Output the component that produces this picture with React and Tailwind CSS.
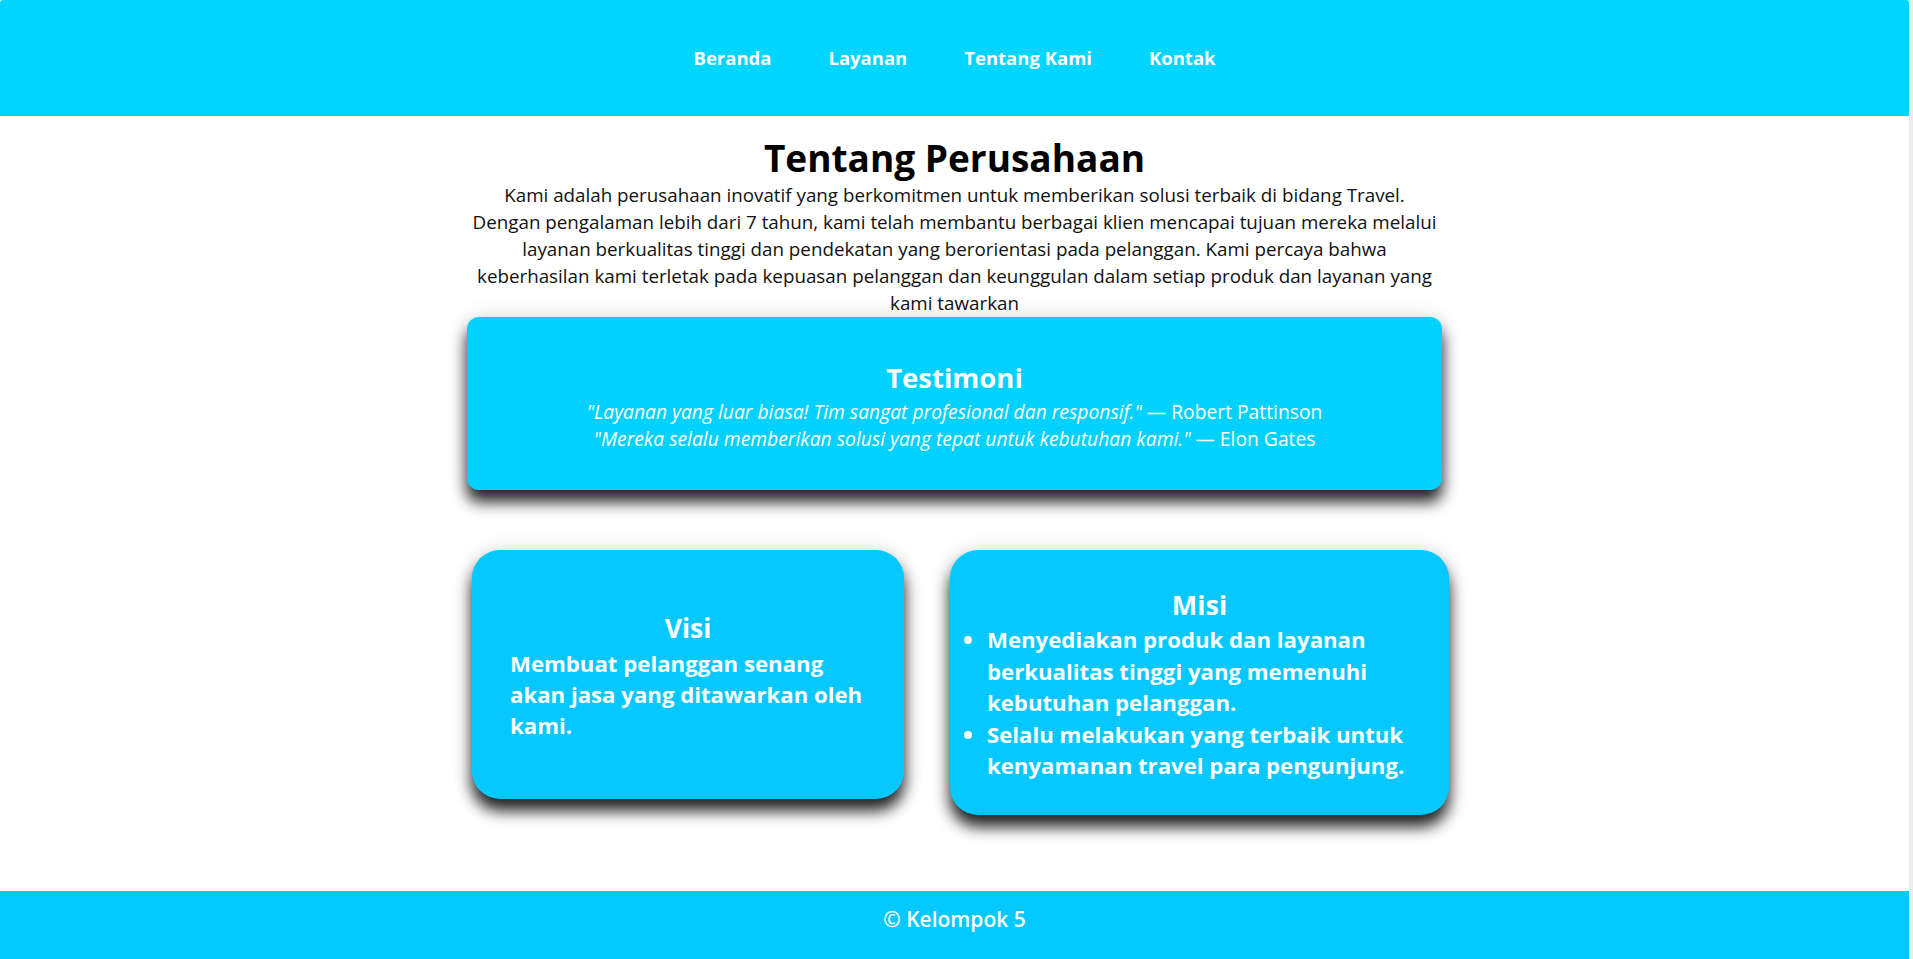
export default function App() {
  const navItems = ['Beranda', 'Layanan', 'Tentang Kami', 'Kontak'];

  return (
    <div className="flex min-h-screen w-full bg-white font-['Open_Sans','Noto_Sans',sans-serif]">
      <div className="flex min-h-screen flex-1 flex-col">
        <header className="flex h-[116px] items-center justify-center rounded-t-[3px] bg-[#00d5ff]">
          <nav className="flex gap-[57px]">
            {navItems.map((item) => (
              <a key={item} href="#" className="text-[18.5px] font-bold text-white">
                {item}
              </a>
            ))}
          </nav>
        </header>

        <main className="flex flex-1 flex-col items-center">
          <section className="w-[975px] pt-[18px] text-center">
            <h1 className="text-[37px] leading-[48px] font-bold text-black">Tentang Perusahaan</h1>
            <p className="text-[18.8px] leading-[27px] text-[#111]">
              Kami adalah perusahaan inovatif yang berkomitmen untuk memberikan solusi terbaik di bidang Travel.
              <br />
              Dengan pengalaman lebih dari 7 tahun, kami telah membantu berbagai klien mencapai tujuan mereka melalui
              <br />
              layanan berkualitas tinggi dan pendekatan yang berorientasi pada pelanggan. Kami percaya bahwa
              <br />
              keberhasilan kami terletak pada kepuasan pelanggan dan keunggulan dalam setiap produk dan layanan yang
              <br />
              kami tawarkan
            </p>

            <div className="h-[173px] rounded-[12px] bg-[#00d1ff] pt-[43px] text-white shadow-[0_12px_15px_rgba(0,0,0,0.85),0_0_22px_rgba(0,0,0,0.12)]">
              <h2 className="text-[27.5px] leading-[36px] font-bold">Testimoni</h2>
              <p className="mt-[2px] text-[19.3px] leading-[27px]">
                <em>"Layanan yang luar biasa! Tim sangat profesional dan responsif."</em> — Robert Pattinson
              </p>
              <p className="text-[19.3px] leading-[27px]">
                <em>"Mereka selalu memberikan solusi yang tepat untuk kebutuhan kami."</em> — Elon Gates
              </p>
            </div>

            <div className="mt-[60px] flex gap-[46px] pl-[5px] text-white">
              <div className="h-[249px] w-[432px] shrink-0 rounded-[28px] bg-[#05c8ff] px-[38px] pt-[61px] shadow-[0_12px_15px_rgba(0,0,0,0.85),0_0_22px_rgba(0,0,0,0.12)]">
                <h2 className="text-[26.5px] leading-[34px] font-bold">Visi</h2>
                <p className="mt-[3px] text-left text-[22.2px] leading-[31px] font-bold">
                  Membuat pelanggan senang akan jasa yang ditawarkan oleh kami.
                </p>
              </div>

              <div className="h-[265px] w-[499px] shrink-0 rounded-[28px] bg-[#05c8ff] px-[20px] pt-[38px] shadow-[0_12px_15px_rgba(0,0,0,0.85),0_0_22px_rgba(0,0,0,0.12)]">
                <h2 className="text-[27px] leading-[34px] font-bold">Misi</h2>
                <ul className="mt-[2px] list-disc pl-[17px] text-left text-[22.2px] leading-[31.5px] font-bold">
                  <li>Menyediakan produk dan layanan berkualitas tinggi yang memenuhi kebutuhan pelanggan.</li>
                  <li>Selalu melakukan yang terbaik untuk kenyamanan travel para pengunjung.</li>
                </ul>
              </div>
            </div>
          </section>
        </main>

        <footer className="mt-[76px] flex h-[68px] justify-center bg-[#03c9ff] pt-[14px]">
          <p className="text-[21px] leading-[28px] font-semibold text-white">© Kelompok 5</p>
        </footer>
      </div>
      <div className="w-[4px] bg-[#ececec]" />
    </div>
  );
}
